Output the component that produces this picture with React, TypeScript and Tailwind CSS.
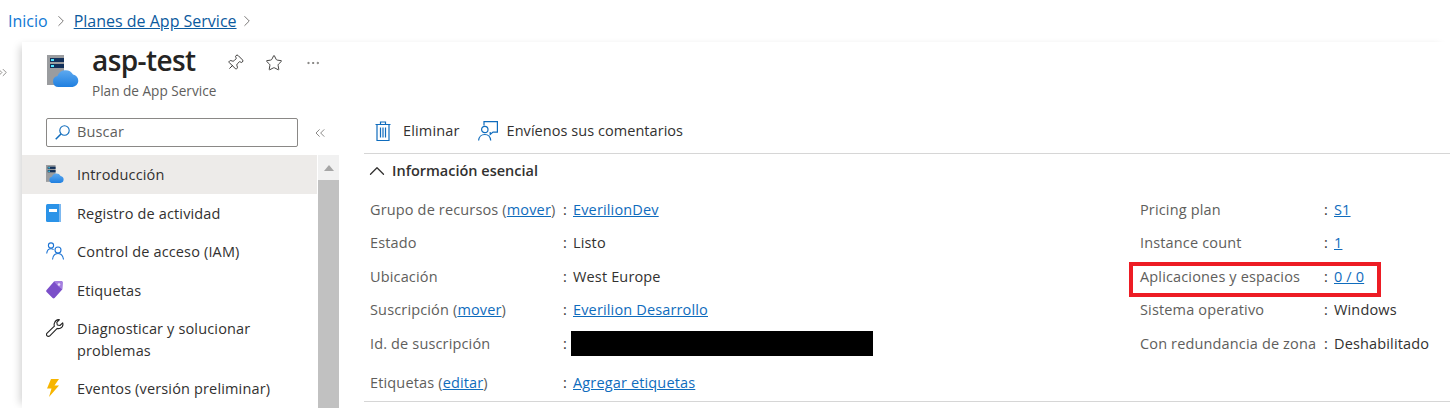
import { ChevronUp, ChevronsLeft, ChevronsRight, ChevronRight, Ellipsis, Pin, Star } from "lucide-react";
import type { ReactNode } from "react";

function PlanIcon({ size, id }: { size: number; id: string }) {
  return (
    <svg width={size} height={size} viewBox="0 0 32 32">
      <defs>
        <linearGradient id={id} x1="0" y1="0" x2="0" y2="1">
          <stop offset="0" stopColor="#5ea9ef" />
          <stop offset="1" stopColor="#1f7fe0" />
        </linearGradient>
      </defs>
      <rect x="0" y="0" width="17" height="30" fill="#9a9c9f" />
      <rect x="3" y="3" width="14" height="4" fill="#12305a" />
      <rect x="3" y="9" width="14" height="4" fill="#12305a" />
      <rect x="4" y="4" width="3" height="2" fill="#50e6ff" />
      <rect x="4" y="10" width="3" height="2" fill="#50e6ff" />
      <path d="M11.500 32a5.500 5.500 0 0 1-1-10.900A8.500 8.500 0 0 1 26 19.500 6.300 6.300 0 0 1 25.500 32Z" fill={`url(#${id})`} />
    </svg>
  );
}

function BookIcon() {
  return (
    <svg width="16" height="18" viewBox="0 0 16 18">
      <rect x="0" y="0" width="15" height="18" rx="1.500" fill="#2b93e8" />
      <rect x="13" y="0" width="2" height="18" fill="#7cb8f0" />
      <rect x="3" y="5" width="8" height="3" fill="#ffffff" />
    </svg>
  );
}

function PeopleIcon() {
  return (
    <svg width="18" height="18" viewBox="0 0 18 18" fill="none" stroke="#1d74d4" strokeWidth="1.1">
      <circle cx="5" cy="3.500" r="2.600" />
      <path d="M.7 11.500c.3-3 2-4.800 4.300-4.800 1 0 1.900.3 2.600.9" />
      <circle cx="12" cy="8" r="3" />
      <path d="M6.500 17.500c.4-3.600 2.600-6 5.500-6s5 2.400 5.500 6" />
    </svg>
  );
}

function TagIcon() {
  return (
    <svg width="17" height="18" viewBox="0 0 17 18">
      <path d="M8 .5 15 0a1.500 1.500 0 0 1 1.600 1.600l-.4 7L8.600 17a1.500 1.500 0 0 1-2 0L.6 11a1.500 1.500 0 0 1 0-2Z" fill="#7b4fc9" />
      <path d="M8 .5 15 0a1.500 1.500 0 0 1 1.600 1.600l-.4 7L12 5Z" fill="#a57fe0" />
      <circle cx="13" cy="3.500" r="1.300" fill="#e8dcf8" />
    </svg>
  );
}

function WrenchIcon() {
  return (
    <svg width="18" height="18" viewBox="0 0 18 18" fill="none" stroke="#222222" strokeWidth="1.1" strokeLinejoin="round">
      <path d="M13.500.7 10.800 3.400l.5 2.600 2.600.5 2.800-2.700c.6 2.300-.3 4.600-2.400 5.500-1.100.5-2.200.4-3.100.1L3.800 16.800c-.8.8-2 .8-2.700 0-.8-.8-.7-1.900 0-2.600l7.300-7c-.4-1-.4-2.200.1-3.300C9.400 1.600 11.300.3 13.500.7Z" />
    </svg>
  );
}

function BoltIcon() {
  return (
    <svg width="14" height="18" viewBox="0 0 14 18">
      <path d="M5 0h8L8.500 6.500H13L3 18l2.500-8.500H1Z" fill="#f7b500" />
    </svg>
  );
}

function SearchIcon() {
  return (
    <svg width="15" height="15" viewBox="0 0 15 15" fill="none" stroke="#0f6cbd" strokeWidth="1.100">
      <circle cx="9.500" cy="5.500" r="4.700" />
      <path d="M6 9 .7 14.300" strokeWidth="1.500" />
    </svg>
  );
}

function TrashIcon() {
  return (
    <svg width="16" height="20" viewBox="0 0 16 20" fill="none" stroke="#0f6cbd" strokeWidth="1.200">
      <path d="M.5 3.500h15M5.500 3.500V1h5v2.500M2 3.500V19.500h12V3.500M5.500 6.500v10M8 6.500v10M10.500 6.500v10" />
    </svg>
  );
}

function FeedbackIcon() {
  return (
    <svg width="20" height="20" viewBox="0 0 20 20" fill="none" stroke="#0f6cbd" strokeWidth="1.200">
      <path d="M6 4.500V.6h13.400v10.500h-4.400l-2.800 2.400v-2.400" />
      <circle cx="6.800" cy="8.500" r="3.200" />
      <path d="M.6 19.500c.3-3.500 2.800-6 6.200-6s5.600 2.500 5.900 6" />
    </svg>
  );
}

function MenuItem({ icon, children, active, wrap }: { icon: ReactNode; children: ReactNode; active?: boolean; wrap?: boolean }) {
  return (
    <div className={`flex ${wrap ? "h-[60px] items-start pt-[7px]" : "h-[38.500px] items-center"} ${active ? "bg-[#edebe9]" : ""}`}>
      <div className={`ml-[24px] flex w-[31px] shrink-0 justify-start ${wrap ? "pt-[3px]" : ""}`}>{icon}</div>
      <div className="w-[205px] pt-[2px] leading-[22px] text-[#323130]">{children}</div>
    </div>
  );
}

const linkCls = "text-[#0f6cbd] underline";

function Field({ label, extra, children }: { label: ReactNode; extra?: string; children: ReactNode }) {
  return (
    <div className={`flex h-[33.500px] items-center ${extra ?? ""}`}>
      {label}
      <span className="mr-[5px] w-[5px] text-[#323130]">:</span>
      <span className="text-[#323130]">{children}</span>
    </div>
  );
}

function LeftLabel({ children }: { children: ReactNode }) {
  return <span className="w-[193px] shrink-0 text-[#605e5c]">{children}</span>;
}

function RightLabel({ children }: { children: ReactNode }) {
  return <span className="w-[184px] shrink-0 text-[#605e5c]">{children}</span>;
}

export default function App() {
  return (
    <div className="h-[408px] w-[1450px] overflow-hidden bg-white font-['Open_Sans','Liberation_Sans',sans-serif] text-[14.500px] tracking-[0.15px]">
      {/* Breadcrumb */}
      <div className="flex h-[42px] items-center pl-[8px] text-[16px] tracking-normal">
        <span className="text-[#0f78d4]">Inicio</span>
        <ChevronRight size={18} strokeWidth={1.1} className="ml-[4px] mr-[4px] text-[#605e5c]" />
        <span className="text-[#0b5a9e] underline">Planes de App Service</span>
        <ChevronRight size={18} strokeWidth={1.1} className="ml-[1px] text-[#605e5c]" />
      </div>

      <div className="flex h-[366px]">
        {/* Collapsed rail */}
        <div className="w-[22px] shrink-0 pt-[23px] text-[#605e5c]">
          <ChevronsRight size={15} strokeWidth={1.1} className="-ml-[5px]" />
        </div>

        <div className="flex-1 shadow-[-6px_0_8px_-4px_rgba(0,0,0,0.18)]">
          {/* Resource header */}
          <div className="flex h-[63px] pl-[25px] pt-[13px]">
            <PlanIcon size={32} id="plan-lg" />
            <div className="ml-[13px] -mt-[14px]">
              <div className="flex items-center">
                <span className="text-[28px] font-semibold leading-[38px] tracking-[-0.6px] text-[#252423]">asp-test</span>
                <Pin size={18} strokeWidth={1.2} className="ml-[31px] mt-[5px] rotate-45 text-[#323130]" />
                <Star size={18} strokeWidth={1.2} className="ml-[21px] mt-[5px] text-[#323130]" />
                <Ellipsis size={16} strokeWidth={1.1} className="ml-[22px] mt-[5px] text-[#605e5c]" />
              </div>
              <div className="mt-[5px] text-[13.600px] leading-[14px] tracking-normal text-[#605e5c]">Plan de App Service</div>
            </div>
          </div>

          <div className="flex">
            {/* Sidebar */}
            <div className="w-[318px] shrink-0">
              <div className="flex h-[50px] items-start pt-[13px]">
                <div className="ml-[24px] flex h-[29px] w-[252px] items-center rounded-[2px] border border-[#8a8886] pl-[8px] text-[#605e5c]">
                  <SearchIcon />
                  <span className="ml-[7px] -mt-[2px]">Buscar</span>
                </div>
                <ChevronsLeft size={16} strokeWidth={1.1} className="ml-[14px] mt-[7px] text-[#605e5c]" />
              </div>
              <div className="flex">
                <div className="w-[295px]">
                  <MenuItem icon={<PlanIcon size={18} id="plan-sm" />} active>Introducción</MenuItem>
                  <MenuItem icon={<BookIcon />}>Registro de actividad</MenuItem>
                  <MenuItem icon={<PeopleIcon />}>Control de acceso (IAM)</MenuItem>
                  <MenuItem icon={<TagIcon />}>Etiquetas</MenuItem>
                  <MenuItem icon={<WrenchIcon />} wrap>Diagnosticar y solucionar problemas</MenuItem>
                  <MenuItem icon={<BoltIcon />}>Eventos (versión preliminar)</MenuItem>
                </div>
                <div className="ml-[1px] h-[253px] w-[21px] bg-[#f1f1f1]">
                  <div className="flex h-[25px] items-center justify-center">
                    <div className="h-0 w-0 border-x-[5px] border-b-[6px] border-x-transparent border-b-[#a6a6a6]" />
                  </div>
                  <div className="h-[228px] bg-[#c1c1c1]" />
                </div>
              </div>
            </div>

            {/* Content */}
            <div className="ml-[24px] flex-1">
              <div className="flex h-[49px] items-center border-b border-[#d6d6d6] pl-[11px] pt-[4px] text-[#323130]">
                <TrashIcon />
                <span className="ml-[12px]">Eliminar</span>
                <div className="ml-[18px]"><FeedbackIcon /></div>
                <span className="ml-[9px] tracking-[0.05px]">Envíenos sus comentarios</span>
              </div>
              <div className="flex h-[34px] items-center font-semibold tracking-normal text-[#323130]">
                <ChevronUp size={26} strokeWidth={1.2} />
                <span className="ml-[2px]">Información esencial</span>
              </div>
              <div className="relative h-[214px] border-b border-[#d6d6d6] pt-[5px]">
                <div className="flex">
                  <div className="w-[776px] pl-[6px]">
                    <Field label={<LeftLabel>Grupo de recursos (<span className={linkCls}>mover</span>)</LeftLabel>}>
                      <span className={linkCls}>EverilionDev</span>
                    </Field>
                    <Field label={<LeftLabel>Estado</LeftLabel>}>Listo</Field>
                    <Field label={<LeftLabel>Ubicación</LeftLabel>}>West Europe</Field>
                    <Field label={<LeftLabel>Suscripción (<span className={linkCls}>mover</span>)</LeftLabel>}>
                      <span className={linkCls}>Everilion Desarrollo</span>
                    </Field>
                    <Field label={<LeftLabel>Id. de suscripción</LeftLabel>}>
                      <div className="-ml-[2px] h-[25px] w-[302px] bg-black" />
                    </Field>
                    <Field extra="mt-[6px]" label={<LeftLabel>Etiquetas (<span className={linkCls}>editar</span>)</LeftLabel>}>
                      <span className={linkCls}>Agregar etiquetas</span>
                    </Field>
                  </div>
                  <div className="flex-1">
                    <Field label={<RightLabel>Pricing plan</RightLabel>}><span className={linkCls}>S1</span></Field>
                    <Field label={<RightLabel>Instance count</RightLabel>}><span className={linkCls}>1</span></Field>
                    <Field label={<RightLabel>Aplicaciones y espacios</RightLabel>}><span className={linkCls}>0 / 0</span></Field>
                    <Field label={<RightLabel>Sistema operativo</RightLabel>}>Windows</Field>
                    <Field label={<RightLabel>Con redundancia de zona</RightLabel>}>Deshabilitado</Field>
                  </div>
                </div>
                {/* Red highlight */}
                <div className="absolute left-[765px] top-[74px] h-[35px] w-[252px] border-[4px] border-[#ed1c24]" />
              </div>
            </div>
          </div>
        </div>
      </div>
    </div>
  );
}
